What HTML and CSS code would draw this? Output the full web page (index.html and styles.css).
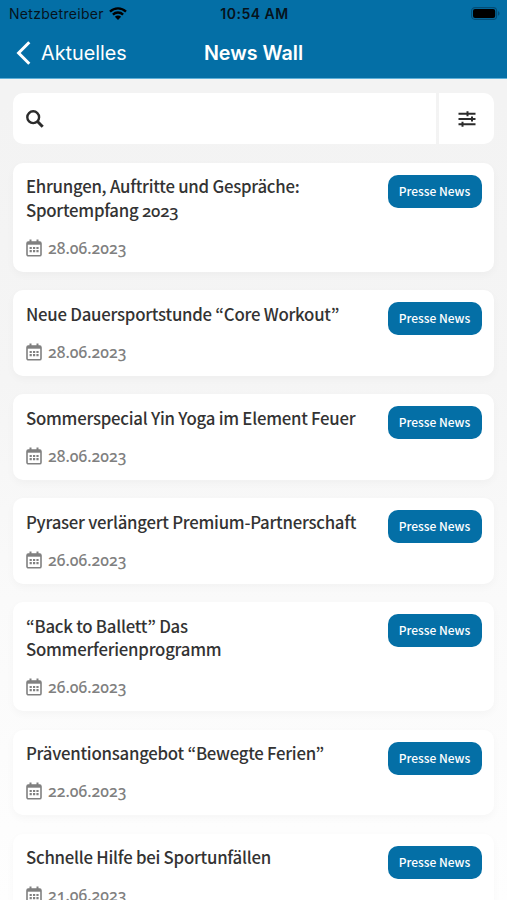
FILE: index.html
```html
<!DOCTYPE html>
<html lang="de">
 <head>
  <meta charset="utf-8">
  <title>News Wall</title>
  <link rel="stylesheet" href="styles.css">
 </head>
 <body>
  <svg width="0" height="0" class="icons">
    <symbol id="calendar" viewBox="0 0 16 18">
      <path d="M4.5 0.5v3M11.5 0.5v3" stroke="currentColor" stroke-width="2"/>
      <rect x="1" y="3" width="14" height="13.8" rx="1.4" fill="none" stroke="currentColor" stroke-width="1.6"/>
      <path d="M1 4.3h14" stroke="currentColor" stroke-width="2.8"/>
      <path d="M3.6 9h9M3.6 12.2h9" stroke="currentColor" stroke-width="2.2" stroke-dasharray="2.2 1.2"/>
    </symbol>
  </svg>
  <header class="header">
    <div class="status">
      <div class="carrier">
        <span>Netzbetreiber</span>
        <svg class="wifi" width="18" height="13" viewBox="0 0 18 13">
          <path d="M1 4.6a11.5 11.5 0 0 1 16 0M3.9 7.6a7.3 7.3 0 0 1 10.2 0" fill="none" stroke="#000" stroke-width="2.3"/>
          <path d="M5.9 9.7a4.4 4.4 0 0 1 6.2 0L9 12.9z"/>
        </svg>
      </div>
      <span class="time">10:54 AM</span>
      <svg class="battery" width="29" height="13" viewBox="0 0 29 13">
        <rect x="0.6" y="0.6" width="25" height="11.8" rx="3.4" fill="none" stroke="#034d76" stroke-width="1.1"/>
        <rect x="2" y="2" width="22.2" height="9" rx="2"/>
        <path d="M27 4.3c2 .7 2 3.7 0 4.4z" fill="#034d76"/>
      </svg>
    </div>
    <nav class="nav">
      <a class="back">
        <svg width="15" height="24" viewBox="0 0 15 24"><path d="M13.3 1.2L2.6 12l10.7 10.8" fill="none" stroke="#fff" stroke-width="3"/></svg>
        <span>Aktuelles</span>
      </a>
      <h1 class="title">News Wall</h1>
    </nav>
  </header>
  <main class="content">
    <div class="search">
      <div class="searchInput">
        <svg width="18" height="18" viewBox="0 0 18 18" fill="none" stroke="#2b2b2b"><circle cx="7.2" cy="7.2" r="5.9" stroke-width="2.4"/><path d="M11.5 11.5l5.2 5.2" stroke-width="3"/></svg>
      </div>
      <div class="filter">
        <svg width="18" height="16" viewBox="0 0 18 16" fill="none" stroke="#2b2b2b" stroke-width="2"><path d="M.5 2.7h17M.5 8h17M.5 13.3h17M9.5 .2v5M14 5.5v5M4.5 10.8v5"/></svg>
      </div>
    </div>
    <article class="card">
      <div class="info">
        <h2>Ehrungen, Auftritte und Gespräche:<br>Sportempfang <span class="num">2023</span></h2>
        <p class="date"><svg><use href="#calendar"/></svg><span class="num">28.06.2023</span></p>
      </div>
      <span class="tag">Presse News</span>
    </article>
    <article class="card">
      <div class="info">
        <h2>Neue Dauersportstunde “Core Workout”</h2>
        <p class="date"><svg><use href="#calendar"/></svg><span class="num">28.06.2023</span></p>
      </div>
      <span class="tag">Presse News</span>
    </article>
    <article class="card">
      <div class="info">
        <h2>Sommerspecial Yin Yoga im Element Feuer</h2>
        <p class="date"><svg><use href="#calendar"/></svg><span class="num">28.06.2023</span></p>
      </div>
      <span class="tag">Presse News</span>
    </article>
    <article class="card">
      <div class="info">
        <h2>Pyraser verlängert Premium-Partnerschaft</h2>
        <p class="date"><svg><use href="#calendar"/></svg><span class="num">26.06.2023</span></p>
      </div>
      <span class="tag">Presse News</span>
    </article>
    <article class="card">
      <div class="info">
        <h2>“Back to Ballett” Das<br>Sommerferienprogramm</h2>
        <p class="date"><svg><use href="#calendar"/></svg><span class="num">26.06.2023</span></p>
      </div>
      <span class="tag">Presse News</span>
    </article>
    <article class="card">
      <div class="info">
        <h2>Präventionsangebot “Bewegte Ferien”</h2>
        <p class="date"><svg><use href="#calendar"/></svg><span class="num">22.06.2023</span></p>
      </div>
      <span class="tag">Presse News</span>
    </article>
    <article class="card">
      <div class="info">
        <h2>Schnelle Hilfe bei Sportunfällen</h2>
        <p class="date"><svg><use href="#calendar"/></svg><span class="num">21.06.2023</span></p>
      </div>
      <span class="tag">Presse News</span>
    </article>
  </main>
 </body>
</html>
```
FILE: styles.css
```css
* {
  margin: 0;
  padding: 0;
  box-sizing: border-box;
}
body {
  height: 900px;
  overflow: hidden;
  font-family: "Noto Sans CJK KR", "Noto Sans", sans-serif;
  background: linear-gradient(#f3f3f3 100px, #f5f5f5 380px, #fafafa 600px, #fdfdfd 830px, #fefefe);
}
.icons {
  display: block;
}
.header {
  height: 79px;
  background: #046fa6;
  border-bottom: 1px solid #5fb0d9;
  font-family: Inter, sans-serif;
}
.status {
  height: 27px;
  padding: 0 7px 0 9px;
  display: grid;
  grid-template-columns: 1fr auto 1fr;
  align-items: center;
  font-size: 14px;
  color: #06131c;
}
.carrier {
  display: flex;
  align-items: center;
  gap: 5px;
  letter-spacing: 0.3px;
}
.time {
  font-weight: 600;
  letter-spacing: 0.5px;
}
.battery {
  justify-self: end;
}
.nav {
  height: 51px;
  padding: 0 16px;
  display: grid;
  grid-template-columns: 1fr auto 1fr;
  align-items: center;
  color: #fff;
}
.back {
  display: flex;
  align-items: center;
  gap: 10px;
  font-size: 19.8px;
}
.title {
  font-size: 19.7px;
  font-weight: 600;
}
.content {
  padding: 14px 13px 0;
  display: flex;
  flex-direction: column;
  gap: 18.5px;
}
.search {
  height: 51px;
  display: flex;
  gap: 3px;
}
.searchInput {
  flex: 1;
  padding-left: 13px;
  display: flex;
  align-items: center;
  background: #fff;
  border-radius: 10px 0 0 10px;
}
.filter {
  width: 55px;
  display: flex;
  align-items: center;
  justify-content: center;
  background: #fff;
  border-radius: 0 10px 10px 0;
}
.card {
  flex: none;
  padding: 12px 12.5px 12px 13px;
  display: flex;
  justify-content: space-between;
  align-items: flex-start;
  background: #fff;
  border-radius: 10px;
  box-shadow: 0 3px 8px rgba(0, 0, 0, 0.03);
}
.card h2 {
  padding-top: 0.5px;
  font-size: 16.8px;
  line-height: 23.5px;
  font-weight: 500;
  letter-spacing: -0.25px;
  color: #333;
  white-space: nowrap;
}
.num {
  font-family: "Noto Sans", sans-serif;
  font-variant-numeric: oldstyle-nums;
}
.date {
  height: 24px;
  margin-top: 13.5px;
  display: flex;
  align-items: center;
  gap: 6px;
  font-size: 15.7px;
  font-weight: 500;
  color: #808080;
}
.date svg {
  width: 16px;
  height: 18px;
}
.tag {
  flex: none;
  width: 94px;
  height: 33px;
  line-height: 32px;
  text-align: center;
  font-size: 12px;
  font-weight: 500;
  color: #fff;
  background: #046fa6;
  border-radius: 10px;
}
```
